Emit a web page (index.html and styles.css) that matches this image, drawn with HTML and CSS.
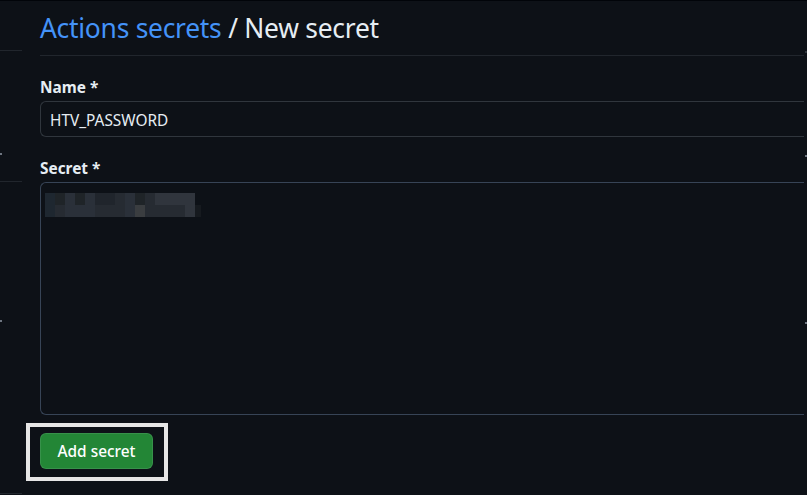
FILE: index.html
```html
<!DOCTYPE html>
<html lang="en">
<head>
<meta charset="utf-8">
<title>New secret</title>
<link rel="stylesheet" href="styles.css">
</head>
<body>
<div class="page">
  <aside class="sidebar">
    <div class="side-item side-a"></div>
    <div class="side-item side-b"><span class="tick tick-b"></span></div>
    <div class="side-item side-c"><span class="tick tick-c"></span></div>
  </aside>
  <main class="main">
    <h1 class="title"><a class="crumb" href="#">Actions secrets</a> / New secret</h1>
    <form class="form">
      <div class="group group-name">
        <label class="label" for="name">Name *</label>
        <div class="input">HTV_PASSWORD</div>
      </div>
      <div class="group">
        <label class="label" for="secret">Secret *</label>
        <div class="textarea">
          <div class="blur">
            <div class="blur-row">
              <span class="b b1"></span><span class="b b2"></span><span class="b b5"></span><span class="b b2"></span><span class="b b5"></span><span class="b b3"></span><span class="b b3"></span><span class="b b4"></span><span class="b b5"></span><span class="b b2"></span><span class="b b4"></span><span class="b b6"></span><span class="b b6"></span><span class="b b6"></span><span class="b b6"></span>
            </div>
            <div class="blur-row">
              <span class="b b1"></span><span class="b b4"></span><span class="b b5"></span><span class="b b5"></span><span class="b b5"></span><span class="b b4"></span><span class="b b4"></span><span class="b b4"></span><span class="b b5"></span><span class="b b7"></span><span class="b b4"></span><span class="b b4"></span><span class="b b4"></span><span class="b b4"></span><span class="b b6"></span><span class="b b8"></span>
            </div>
          </div>
        </div>
      </div>
      <div class="highlight">
        <button class="btn" type="button">Add secret</button>
      </div>
    </form>
  </main>
  <div class="edge">
    <span class="edge-mark edge-a"></span>
    <span class="edge-mark edge-b"></span>
    <span class="edge-mark edge-c"></span>
  </div>
</div>
</body>
</html>
```

FILE: styles.css
```css
* { box-sizing: border-box; }
html, body { margin: 0; padding: 0; }
body {
  background: #0d1117;
  color: #e6edf3;
  font-family: "Noto Sans", "Liberation Sans", sans-serif;
  height: 495px;
  overflow: hidden;
  border-top: 1px solid #010409;
}
.page {
  display: flex;
  height: 494px;
}
.sidebar {
  width: 22px;
  flex: none;
  display: flex;
  flex-direction: column;
}
.side-item {
  border-bottom: 1px solid #21262d;
  position: relative;
}
.side-a { height: 50px; }
.side-b { height: 131px; }
.side-c { height: 312px; }
.tick {
  position: absolute;
  left: 0;
  width: 2px;
  height: 2px;
  background: #6e7681;
}
.tick-b { top: 102px; }
.tick-c { top: 138px; }
.main {
  flex: 1;
  margin-left: 18px;
  min-width: 0;
}
.title {
  margin: 0;
  padding-top: 11px;
  height: 55px;
  border-bottom: 1px solid #21262d;
  font-size: 26.4px;
  font-weight: 400;
  line-height: 33px;
  color: #e6edf3;
  letter-spacing: -0.25px;
}
.crumb {
  color: #4493f8;
  text-decoration: none;
}
.form {
  display: flex;
  flex-direction: column;
  padding-top: 20px;
}
.group {
  display: flex;
  flex-direction: column;
  margin-bottom: 18px;
}
.group-name { margin-bottom: 20px; }
.label {
  font-size: 15.4px;
  font-weight: 700;
  line-height: 23px;
  margin-bottom: 2px;
  color: #e6edf3;
}
.input {
  height: 36px;
  border: 1px solid #30363d;
  border-right: none;
  border-radius: 6px 0 0 6px;
  padding: 4px 9px 0;
  font-size: 15.4px;
  line-height: 30px;
  color: #e6edf3;
}
.textarea {
  height: 233px;
  border: 1px solid #374456;
  border-right: none;
  border-radius: 6px 0 0 6px;
  padding: 10px 4px;
}
.blur {
  display: flex;
  flex-direction: column;
}
.blur-row {
  display: flex;
  height: 12px;
}
.b {
  width: 10px;
  height: 12px;
  flex: none;
}
.b1 { background: #1e2730; }
.b2 { background: #1f2428; }
.b3 { background: #20252c; }
.b4 { background: #262b32; }
.b5 { background: #2a3039; }
.b6 { background: #30353d; }
.b7 { background: #3a3d40; }
.b8 { background: #161a1f; width: 6px; }
.highlight {
  align-self: flex-start;
  margin-left: -14px;
  margin-top: -10px;
  border: 4px solid #e6e6e6;
  padding: 6px 11px 8px 10px;
  display: flex;
}
.btn {
  width: 113px;
  height: 36px;
  background: #238636;
  border: 1px solid rgba(240, 246, 252, 0.1);
  border-radius: 6px;
  color: #ffffff;
  font-family: "Noto Sans", "Liberation Sans", sans-serif;
  font-size: 15.4px;
  font-weight: 500;
  padding: 0;
}
.edge {
  width: 3px;
  flex: none;
  position: relative;
}
.edge-mark {
  position: absolute;
  left: 1px;
  width: 2px;
  height: 2px;
  background: #6e7681;
}
.edge-a { top: 50px; background: #30363d; }
.edge-b { top: 154px; }
.edge-c { top: 321px; }
```
